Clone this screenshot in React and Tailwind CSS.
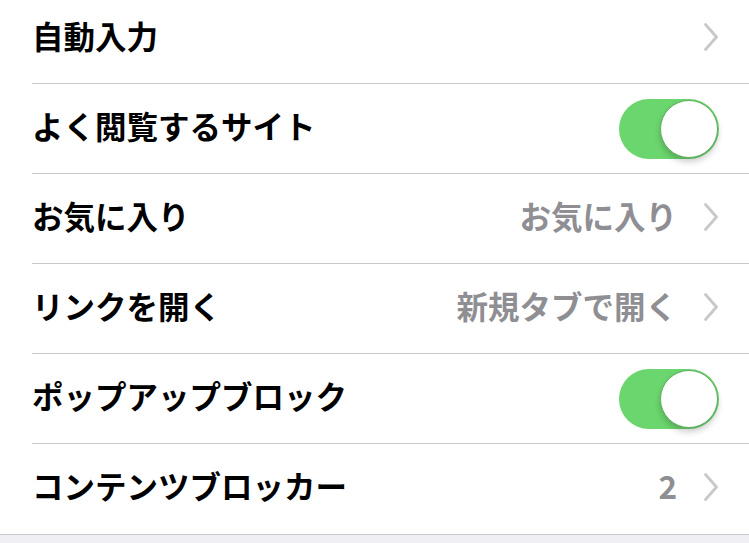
import { useState } from 'react'

const font = { fontFamily: '"Noto Sans CJK JP", "Liberation Sans", sans-serif' }

function Chevron() {
  return (
    <svg width="16" height="30" viewBox="0 0 16 30" className="ml-[26px] mb-[4px] shrink-0">
      <path d="M2.5 2.5 L13.5 15 L2.5 27.5" fill="none" stroke="#c7c7cc" strokeWidth="2.8" strokeLinecap="round" strokeLinejoin="round" />
    </svg>
  )
}

function Toggle({ on }) {
  return (
    <div className={`relative h-[60px] w-[100px] rounded-full ${on ? 'bg-[#6bd66d]' : 'bg-[#e5e5ea]'}`}>
      <div className="absolute right-[1px] top-[1px] h-[58px] w-[58px] rounded-full border border-[#5fae5f] bg-white shadow-[0_4px_6px_rgba(0,0,0,0.2)]" />
    </div>
  )
}

const rows = [
  { label: '自動入力', chevron: true },
  { label: 'よく閲覧するサイト', toggle: true },
  { label: 'お気に入り', value: 'お気に入り', chevron: true },
  { label: 'リンクを開く', value: '新規タブで開く', chevron: true },
  { label: 'ポップアップブロック', toggle: true },
  { label: 'コンテンツブロッカー', value: '2', chevron: true },
]

export default function App() {
  const [items] = useState(rows)
  return (
    <div className="h-[543px] w-[749px] overflow-hidden bg-[#efeff4]" style={font}>
      <div className="-mt-[6px] bg-white border-b border-[#c8c7cc]">
        {items.map((r, i) => (
          <div key={r.label} className="pl-[32px]">
            <div
              className={`flex h-[90px] items-center pr-[30px] ${i < items.length - 1 ? 'border-b border-[#c8c7cc]' : 'h-[89px]'}`}
            >
              <div className="mb-[6px] flex-1 text-[31.5px] font-bold leading-none text-black">{r.label}</div>
              {r.value ? <div className="mb-[6px] text-[31.5px] font-bold leading-none text-[#8e8e93]">{r.value}</div> : null}
              {r.chevron ? <Chevron /> : null}
              {r.toggle ? <Toggle on /> : null}
            </div>
          </div>
        ))}
      </div>
    </div>
  )
}
